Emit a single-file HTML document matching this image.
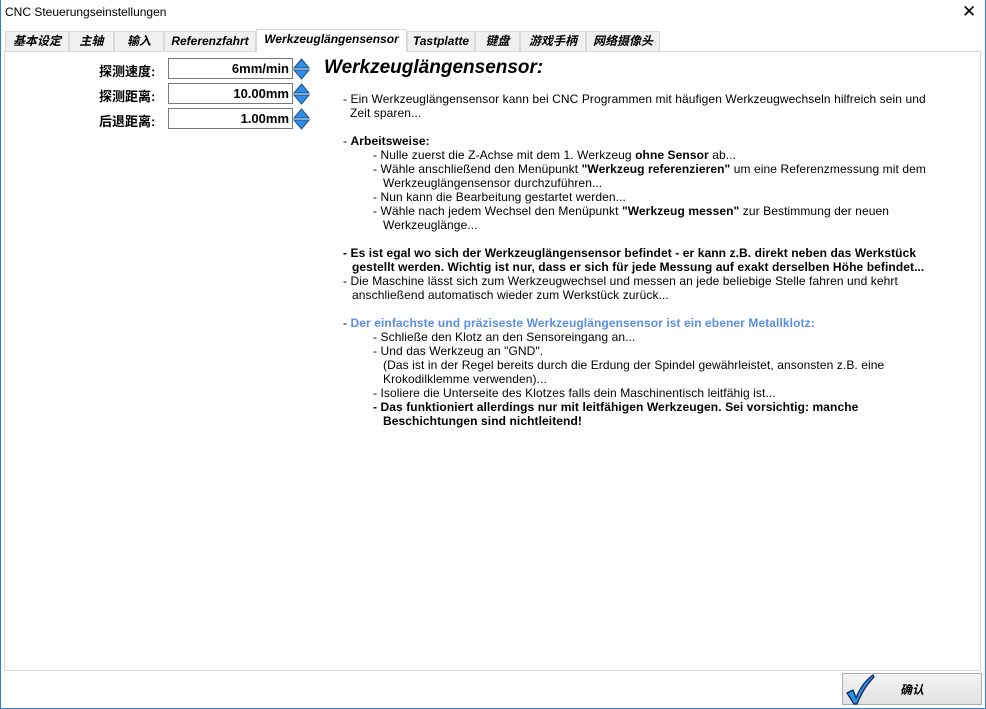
<!DOCTYPE html>
<html><head><meta charset="utf-8"><style>
*{margin:0;padding:0;box-sizing:border-box}
body{width:986px;height:709px;background:#fff;font-family:"Liberation Sans","Noto Sans CJK SC",sans-serif;font-size:12px;color:#000;position:relative;overflow:hidden}
.win{position:absolute;left:0;top:0;width:986px;height:709px;border:1px solid #2b7fd6;border-top:none}
.a{position:absolute;white-space:nowrap}
.t .a{letter-spacing:0.09px}
.tab{position:absolute;top:31px;height:20px;border:1px solid #d9d9d9;border-bottom:none;background:#f0f0f0;font-weight:bold;font-style:italic;font-size:12px;text-align:center;line-height:19px}
.panel{position:absolute;left:4px;top:51px;width:977px;height:620px;border:1px solid #d9d9d9;background:#fff}
.lbl{position:absolute;left:99px;font-weight:bold;font-size:13px}
.inp{position:absolute;left:168px;width:125px;height:21px;border:1px solid #7a7a7a;text-align:right;font-weight:bold;font-size:13px;padding-right:3px;line-height:19px}
.sp{position:absolute;left:293px;width:17px;height:22px}
b{font-weight:bold}
</style></head><body>
<div class="win"></div>
<div class="a" style="left:5px;top:5px;font-size:12px;color:#000">CNC Steuerungseinstellungen</div>
<div class="a" style="left:962px;top:2px;font-size:17px">✕</div>

<div class="tab" style="left:5px;width:64px">基本设定</div>
<div class="tab" style="left:69px;width:45px">主轴</div>
<div class="tab" style="left:114px;width:50px">输入</div>
<div class="tab" style="left:164px;width:92px">Referenzfahrt</div>
<div class="tab" style="left:256px;width:151px;top:29px;height:23px;background:#fff;z-index:2">Werkzeuglängensensor</div>
<div class="tab" style="left:407px;width:68px">Tastplatte</div>
<div class="tab" style="left:475px;width:45px">键盘</div>
<div class="tab" style="left:520px;width:66px">游戏手柄</div>
<div class="tab" style="left:586px;width:74px">网络摄像头</div>

<div class="panel"></div>

<div class="lbl" style="top:61px">探测速度:</div>
<div class="lbl" style="top:86px">探测距离:</div>
<div class="lbl" style="top:111px">后退距离:</div>
<div class="inp" style="top:58px">6mm/min</div>
<div class="inp" style="top:83px">10.00mm</div>
<div class="inp" style="top:108px">1.00mm</div>
<svg class="sp" style="top:58px" viewBox="0 0 17 22"><path d="M8.5 1L16 10H1z" fill="#2e8ee8" stroke="#1a4f8a"/><path d="M8.5 21L16 12H1z" fill="#2e8ee8" stroke="#1a4f8a"/></svg>
<svg class="sp" style="top:83px" viewBox="0 0 17 22"><path d="M8.5 1L16 10H1z" fill="#2e8ee8" stroke="#1a4f8a"/><path d="M8.5 21L16 12H1z" fill="#2e8ee8" stroke="#1a4f8a"/></svg>
<svg class="sp" style="top:108px" viewBox="0 0 17 22"><path d="M8.5 1L16 10H1z" fill="#2e8ee8" stroke="#1a4f8a"/><path d="M8.5 21L16 12H1z" fill="#2e8ee8" stroke="#1a4f8a"/></svg>

<div class="a" style="left:324px;top:57px;font-size:19px;font-weight:bold;font-style:italic">Werkzeuglängensensor:</div>

<div class="t">
<div class="a" style="left:343px;top:92px">- Ein Werkzeuglängensensor kann bei CNC Programmen mit häufigen Werkzeugwechseln hilfreich sein und</div>
<div class="a" style="left:350px;top:106px">Zeit sparen...</div>
<div class="a" style="left:343px;top:134px">- <b>Arbeitsweise:</b></div>
<div class="a" style="left:373px;top:148px">- Nulle zuerst die Z-Achse mit dem 1. Werkzeug <b>ohne Sensor</b> ab...</div>
<div class="a" style="left:373px;top:162px">- Wähle anschließend den Menüpunkt <b>"Werkzeug referenzieren"</b> um eine Referenzmessung mit dem</div>
<div class="a" style="left:383px;top:176px">Werkzeuglängensensor durchzuführen...</div>
<div class="a" style="left:373px;top:190px">- Nun kann die Bearbeitung gestartet werden...</div>
<div class="a" style="left:373px;top:204px">- Wähle nach jedem Wechsel den Menüpunkt <b>"Werkzeug messen"</b> zur Bestimmung der neuen</div>
<div class="a" style="left:383px;top:218px">Werkzeuglänge...</div>
<div class="a" style="left:343px;top:246px"><b>- Es ist egal wo sich der Werkzeuglängensensor befindet - er kann z.B. direkt neben das Werkstück</b></div>
<div class="a" style="left:352px;top:260px"><b>gestellt werden. Wichtig ist nur, dass er sich für jede Messung auf exakt derselben Höhe befindet...</b></div>
<div class="a" style="left:343px;top:274px">- Die Maschine lässt sich zum Werkzeugwechsel und messen an jede beliebige Stelle fahren und kehrt</div>
<div class="a" style="left:352px;top:288px">anschließend automatisch wieder zum Werkstück zurück...</div>
<div class="a" style="left:343px;top:316px">- <b style="color:#5b8ee6">Der einfachste und präziseste Werkzeuglängensensor ist ein ebener Metallklotz:</b></div>
<div class="a" style="left:373px;top:330px">- Schließe den Klotz an den Sensoreingang an...</div>
<div class="a" style="left:373px;top:344px">- Und das Werkzeug an "GND".</div>
<div class="a" style="left:383px;top:358px">(Das ist in der Regel bereits durch die Erdung der Spindel gewährleistet, ansonsten z.B.  eine</div>
<div class="a" style="left:383px;top:372px">Krokodilklemme verwenden)...</div>
<div class="a" style="left:373px;top:386px">- Isoliere die Unterseite des Klotzes falls dein Maschinentisch leitfähig ist...</div>
<div class="a" style="left:373px;top:400px"><b>- Das funktioniert allerdings nur mit leitfähigen Werkzeugen. Sei vorsichtig: manche</b></div>
<div class="a" style="left:383px;top:414px"><b>Beschichtungen sind nichtleitend!</b></div>
</div>

<div class="a" style="left:842px;top:673px;width:140px;height:32px;border:1px solid #adadad;background:linear-gradient(#f4f4f4,#e1e1e1)"></div>
<svg class="a" style="left:845px;top:674px" width="30" height="32" viewBox="0 0 30 32"><path d="M2 19L8 16L11 24C15 14 21 6 28 1L29 3C22 10 16 20 12 30H9z" fill="#2e8ee8" stroke="#0c2a55" stroke-width="1.3" stroke-linejoin="round"/></svg>
<div class="a" style="left:900px;top:681px;font-weight:bold;font-style:italic;font-size:12px">确认</div>
</body></html>
